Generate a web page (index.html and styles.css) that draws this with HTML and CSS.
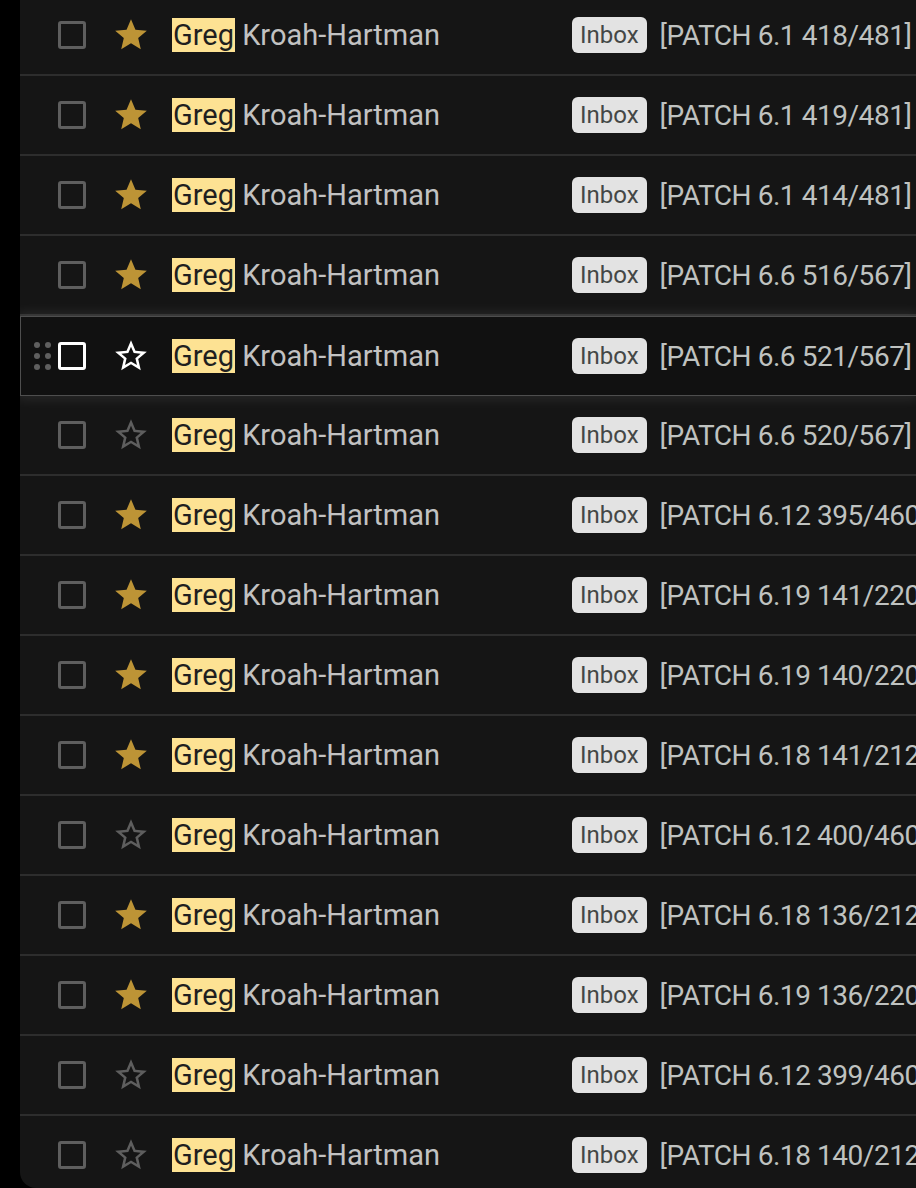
FILE: index.html
```html
<!DOCTYPE html>
<html lang="en">
<head>
    <meta charset="UTF-8">
    <meta name="viewport" content="width=device-width, initial-scale=1.0">
    <title>Inbox</title>
    <link rel="stylesheet" href="styles.css">
</head>
<body>
    <div class="panel">
        <div class="list" id="list"></div>
    </div>

    <svg width="0" height="0" style="position:absolute">
        <defs>
            <path id="star-full" d="M12 17.27L18.18 21l-1.64-7.03L22 9.24l-7.19-.61L12 2 9.19 8.63 2 9.24l5.46 4.73L5.82 21z"/>
            <path id="star-line" d="M22 9.24l-7.19-.62L12 2 9.19 8.63 2 9.24l5.46 4.73L5.82 21 12 17.27 18.18 21l-1.63-7.03L22 9.24zM12 15.4l-3.76 2.27 1-4.28-3.32-2.88 4.38-.38L12 6.1l1.71 4.04 4.38.38-3.32 2.88 1 4.28L12 15.4z"/>
        </defs>
    </svg>

    <script>
        const mails = [
            ["6.1 418/481", "rcu: Fix rcu_read_unlock() deadloop", true],
            ["6.1 419/481", "rtc: interface: Alarm race fix", true],
            ["6.1 414/481", "ring-buffer: Fix a race", true],
            ["6.6 516/567", "", true],
            ["6.6 521/567", "", "hover"],
            ["6.6 520/567", "", false],
            ["6.12 395/460", "", true],
            ["6.19 141/220", "", true],
            ["6.19 140/220", "", true],
            ["6.18 141/212", "", true],
            ["6.12 400/460", "", false],
            ["6.18 136/212", "", true],
            ["6.19 136/220", "", true],
            ["6.12 399/460", "", false],
            ["6.18 140/212", "", false]
        ];

        const list = document.getElementById("list");

        mails.forEach(([patch, subject, starred]) => {
            const row = document.createElement("div");
            row.className = "row" + (starred === "hover" ? " hover" : "");

            let star;
            if (starred === true) {
                star = '<svg class="star starred" viewBox="0 0 24 24"><use href="#star-full"/></svg>';
            } else {
                star = '<svg class="star" viewBox="0 0 24 24"><use href="#star-line"/></svg>';
            }

            row.innerHTML = `
                <div class="handle"><i></i><i></i><i></i><i></i><i></i><i></i></div>
                <div class="check"></div>
                ${star}
                <div class="sender"><span class="hl">Greg</span> Kroah-Hartman</div>
                <span class="label">Inbox</span>
                <div class="subject">[PATCH ${patch}] ${subject}</div>
            `;
            list.appendChild(row);
        });
    </script>
</body>
</html>
```

FILE: styles.css
```css
body {
    margin: 0;
    background-color: #000;
    font-family: Roboto, "Noto Sans", sans-serif;
    height: 1188px;
    overflow: hidden;
}

.panel {
    margin-left: 20px;
    height: 1188px;
    background-color: #151515;
    border-bottom-left-radius: 16px;
    overflow: hidden;
}

.list {
    margin-top: -4px;
}

.row {
    display: flex;
    align-items: center;
    height: 78px;
    border-bottom: 2px solid #2d2d2d;
    padding-left: 14px;
    white-space: nowrap;
    overflow: hidden;
}

.handle {
    width: 16px;
    display: grid;
    grid-template-columns: 5px 5px;
    gap: 5px 6px;
    visibility: hidden;
}

.handle i {
    width: 6px;
    height: 6px;
    border-radius: 50%;
    background-color: #5f5f5f;
}

.check {
    width: 22px;
    height: 22px;
    margin-left: 8px;
    border: 3px solid #5e5e5e;
    border-radius: 3px;
    flex-shrink: 0;
}

.star {
    width: 38px;
    height: 38px;
    margin-left: 26px;
    fill: #5e5e5e;
    flex-shrink: 0;
}

.star.starred {
    fill: #bd9436;
}

.sender {
    width: 400px;
    margin-left: 22px;
    flex-shrink: 0;
    font-size: 29px;
    color: #c2c2c2;
}

.hl {
    background-color: #fde293;
    color: #1f1f1f;
    padding: 0 1px;
}

.label {
    flex-shrink: 0;
    display: flex;
    align-items: center;
    height: 36px;
    background-color: #e3e3e3;
    color: #444746;
    font-size: 24px;
    padding: 0 8px;
    border-radius: 6px;
}

.subject {
    margin-left: 13px;
    font-size: 28px;
    letter-spacing: -0.45px;
    color: #bfc2c0;
}

.row.hover {
    background-color: #111;
    border-top: 1px solid #4e4e4e;
    border-bottom: 1px solid #4e4e4e;
    border-left: 1px solid #4e4e4e;
    padding-left: 13px;
    box-shadow: 0 0 12px 3px rgba(255, 255, 255, 0.09);
    position: relative;
}

.row.hover .handle {
    visibility: visible;
}

.row.hover .check {
    border-color: #fff;
}

.row.hover .star {
    fill: #fff;
}
```
